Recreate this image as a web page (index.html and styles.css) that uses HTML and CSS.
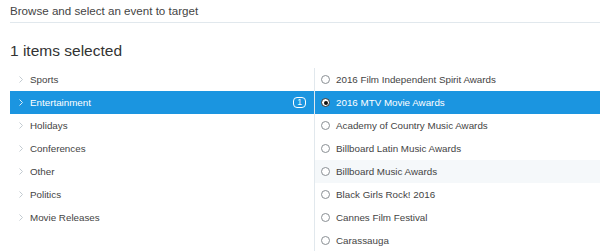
FILE: index.html
```html
<!DOCTYPE html>
<html lang="en">
<head>
  <meta charset="UTF-8">
  <meta name="viewport" content="width=device-width, initial-scale=1.0">
  <title>Select an event</title>
  <link rel="stylesheet" href="styles.css">
</head>
<body>

<div class="picker">
  <div class="picker-header">Browse and select an event to target</div>
  <h2 class="picker-title">1 items selected</h2>

  <div class="picker-panels">
    <!-- Categories on the left -->
    <ul class="categories">
      <li class="category"><svg class="chevron" viewBox="0 0 4 7"><path d="M0.5 0.5 L3.5 3.5 L0.5 6.5"/></svg>Sports</li>
      <li class="category active"><svg class="chevron" viewBox="0 0 4 7"><path d="M0.5 0.5 L3.5 3.5 L0.5 6.5"/></svg>Entertainment<span class="badge">1</span></li>
      <li class="category"><svg class="chevron" viewBox="0 0 4 7"><path d="M0.5 0.5 L3.5 3.5 L0.5 6.5"/></svg>Holidays</li>
      <li class="category"><svg class="chevron" viewBox="0 0 4 7"><path d="M0.5 0.5 L3.5 3.5 L0.5 6.5"/></svg>Conferences</li>
      <li class="category"><svg class="chevron" viewBox="0 0 4 7"><path d="M0.5 0.5 L3.5 3.5 L0.5 6.5"/></svg>Other</li>
      <li class="category"><svg class="chevron" viewBox="0 0 4 7"><path d="M0.5 0.5 L3.5 3.5 L0.5 6.5"/></svg>Politics</li>
      <li class="category"><svg class="chevron" viewBox="0 0 4 7"><path d="M0.5 0.5 L3.5 3.5 L0.5 6.5"/></svg>Movie Releases</li>
    </ul>

    <!-- Events of the chosen category -->
    <ul class="events">
      <li class="event"><span class="radio"></span>2016 Film Independent Spirit Awards</li>
      <li class="event active"><span class="radio checked"></span>2016 MTV Movie Awards</li>
      <li class="event"><span class="radio"></span>Academy of Country Music Awards</li>
      <li class="event"><span class="radio"></span>Billboard Latin Music Awards</li>
      <li class="event hover"><span class="radio"></span>Billboard Music Awards</li>
      <li class="event"><span class="radio"></span>Black Girls Rock! 2016</li>
      <li class="event"><span class="radio"></span>Cannes Film Festival</li>
      <li class="event"><span class="radio"></span>Carassauga</li>
    </ul>
  </div>
</div>

</body>
</html>
```

FILE: styles.css
```css
body {
  margin: 0;
  padding-left: 10px;
  font-family: "Liberation Sans", Arial, sans-serif;
  color: #444;
  background: #fff;
  overflow: hidden;
}

.picker-header {
  font-size: 11.6px;
  line-height: 14px;
  padding: 4px 0 4px 0;
  border-bottom: 1px solid #e1e8ed;
}

.picker-title {
  margin: 18px 0 7px 0;
  font-size: 15.5px;
  line-height: 20px;
  font-weight: normal;
  color: #333;
}

.picker-panels {
  display: flex;
}

.categories,
.events {
  list-style: none;
  margin: 0;
  padding: 0;
}

.categories {
  width: 304px;
  border-right: 1px solid #e1e8ed;
}

.events {
  flex: 1;
}

.category,
.event {
  display: flex;
  align-items: center;
  height: 23px;
  font-size: 9.8px;
  white-space: nowrap;
}

/* Left column rows */
.category {
  padding-left: 9px;
}

.chevron {
  width: 4px;
  height: 7px;
  margin-right: 7px;
  fill: none;
  stroke: #c3cbd1;
  stroke-width: 1;
}

.category.active {
  background-color: #1b95e0;
  color: #fff;
}

.category.active .chevron {
  stroke: #dbeefa;
}

.badge {
  margin-left: auto;
  margin-right: 8px;
  box-sizing: border-box;
  width: 13px;
  height: 11px;
  border: 1px solid #fff;
  border-radius: 4px;
  font-size: 8.5px;
  line-height: 9px;
  text-align: center;
}

/* Right column rows */
.event {
  padding-left: 6px;
}

.radio {
  box-sizing: border-box;
  width: 9px;
  height: 9px;
  margin-right: 6px;
  border: 1px solid #8a8f94;
  border-radius: 50%;
  background: #fff;
  position: relative;
}

.radio.checked {
  border-color: #333;
}

.radio.checked::after {
  content: "";
  position: absolute;
  left: 1.5px;
  top: 1.5px;
  width: 4px;
  height: 4px;
  border-radius: 50%;
  background: #111;
}

.event.active {
  background-color: #1b95e0;
  color: #fff;
}

.event.hover {
  background-color: #f5f8fa;
}
```
